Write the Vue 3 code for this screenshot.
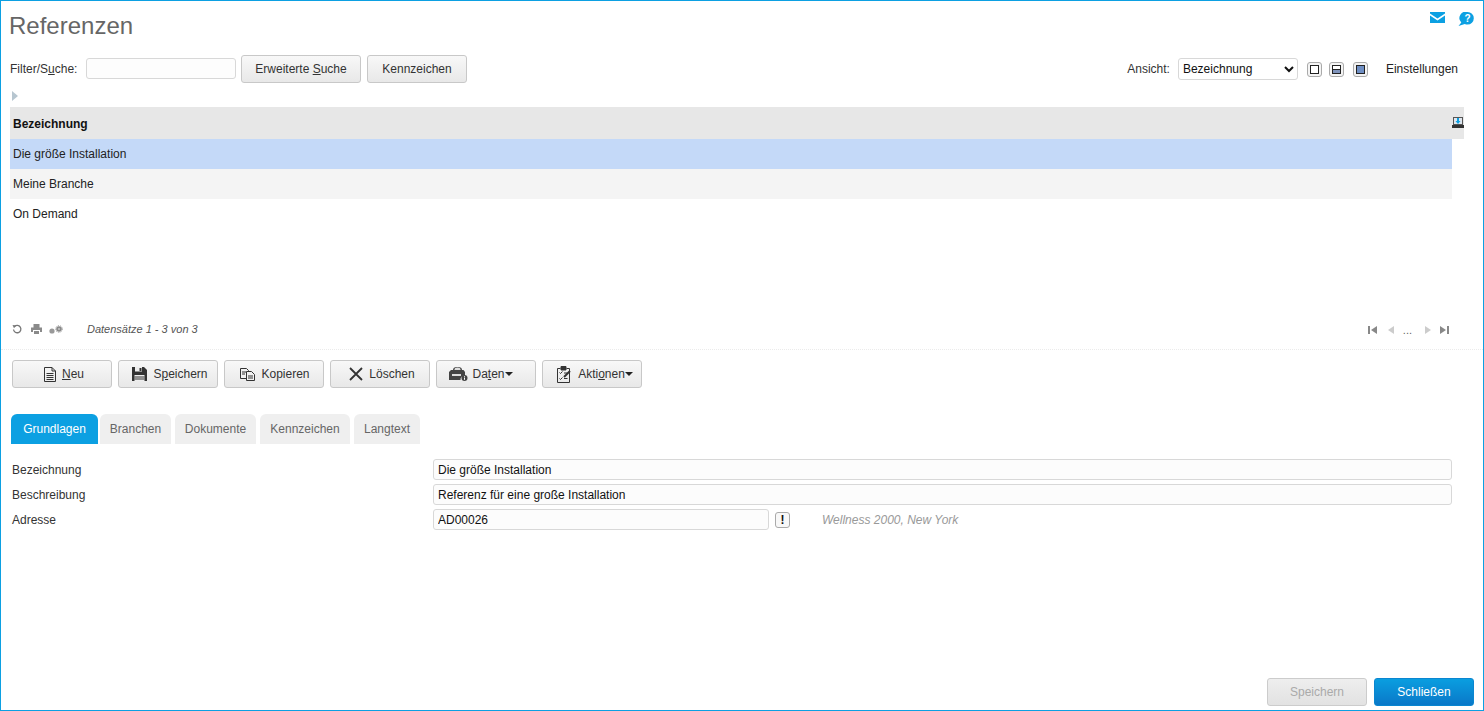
<script setup>
const tabs = ['Grundlagen', 'Branchen', 'Dokumente', 'Kennzeichen', 'Langtext']
const rows = ['Die größe Installation', 'Meine Branche', 'On Demand']
</script>

<template>
  <div class="frame">
    <header class="top">
      <h1>Referenzen</h1>
      <div class="top-icons">
        <svg width="15" height="11" viewBox="0 0 15 11"><path fill="#0ca0e2" d="M0 0h15v1.600L7.500 6.600 0 1.600zM0 3.400l7.500 5 7.500-5V11H0z"/></svg>
        <svg width="16" height="14" viewBox="0 0 16 14"><path fill="#0ca0e2" d="M9.500 0a6.300 6.300 0 0 1 0 12.600c-1 0-1.900-.2-2.700-.6L.5 14l2.800-3.500A6.300 6.300 0 0 1 9.500 0z"/><text x="9.500" y="10" text-anchor="middle" class="q">?</text></svg>
      </div>
    </header>

    <div class="filter">
      <label class="lbl flt">Filter/S<u>u</u>che:</label>
      <input class="search" type="text" />
      <button class="btn b120"><span>Erweiterte <u>S</u>uche</span></button>
      <button class="btn b100 ml6">Kennzeichen</button>
      <div class="view">
        <span class="lbl">Ansicht:</span>
        <select class="sel"><option>Bezeichnung</option></select>
        <span class="vb vb1"><i></i></span>
        <span class="vb vb2"><i></i></span>
        <span class="vb vb3"><i></i></span>
        <span class="settings">Einstellungen</span>
      </div>
    </div>

    <div class="arrow"></div>

    <div class="grid-head">
      <b>Bezeichnung</b>
      <svg class="export" width="12" height="11" viewBox="0 0 12 11"><path fill="#555" d="M1 0h10v8H1z"/><path fill="#dfe6ee" d="M2 1h8v6H2z"/><path fill="#0ca0e2" d="M5 1h2v3h1.500L6 7 3.500 4H5z"/><path fill="#333" d="M0 8h12v3H0z"/></svg>
    </div>
    <div class="grid-body">
      <div v-for="(r, i) in rows" :key="r" class="row" :class="{ sel1: i === 0, alt: i === 1 }">{{ r }}</div>
    </div>

    <div class="pager">
      <svg width="10" height="10" viewBox="0 0 10 10" fill="none" stroke="#777" stroke-width="1.300"><path d="M2.500 2.500A3.700 3.700 0 1 1 1.500 5.500"/><path fill="#777" stroke="none" d="M0.500 1l3.800.4L2 4.300z"/></svg>
      <svg class="ml9" width="11" height="10" viewBox="0 0 11 10"><path fill="#8a8a8a" d="M2.500 0h6v3.500H11V8H9V6H2v2H0V3.500h2.500z"/><path fill="#8a8a8a" d="M3 7h5v3H3z"/></svg>
      <svg class="ml7" width="14" height="9" viewBox="0 0 14 9"><circle cx="3" cy="6" r="2.600" fill="#999"/><circle cx="10" cy="4" r="2.800" fill="#8a8a8a"/><circle cx="10" cy="4" r="3.400" fill="none" stroke="#8a8a8a" stroke-width="0.800" stroke-dasharray="1.200 1.200"/><circle cx="10" cy="4" r="0.900" fill="#ccc"/></svg>
      <em class="records">Datensätze 1 - 3 von 3</em>
      <div class="nav">
        <svg width="9" height="8" viewBox="0 0 9 8"><path fill="#888" d="M0 0h2v8H0zM9 0v8L3 4z"/></svg>
        <svg class="gap-prev" width="6" height="8" viewBox="0 0 6 8"><path fill="#ccc" d="M6 0v8L0 4z"/></svg>
        <span class="dots">...</span>
        <svg width="6" height="8" viewBox="0 0 6 8"><path fill="#ccc" d="M0 0v8l6-4z"/></svg>
        <svg class="gap-last" width="9" height="8" viewBox="0 0 9 8"><path fill="#888" d="M7 0h2v8H7zM0 0v8l6-4z"/></svg>
      </div>
    </div>

    <div class="actions">
      <button class="btn b100">
        <svg width="12" height="15" viewBox="0 0 12 15" fill="none" stroke="#333"><path d="M.5.500h7.500l3.500 3.500v10.500H.5z"/><path d="M8 .5V4h3.500M2.500 6.500h7M2.500 8.500h7M2.500 10.500h7M2.500 12.500h7"/></svg>
        <span><u>N</u>eu</span>
      </button>
      <button class="btn b100">
        <svg width="15" height="14" viewBox="0 0 15 14"><path fill="#333" d="M0 0h12l3 3v11H0z"/><path fill="#eee" d="M3 0h7v4.500H3z"/><path fill="#333" d="M7.500 1h2v3h-2z"/><path fill="#eee" d="M2.500 8h10v6h-10z"/><path fill="#333" d="M2.500 9.500h10v1h-10zM2.500 11.500h10v1h-10z"/></svg>
        <span>S<u>p</u>eichern</span>
      </button>
      <button class="btn b100 kop">
        <svg width="15" height="13" viewBox="0 0 15 13" fill="#f2f2f2" stroke="#333"><path d="M.5.500h6l2 2v8h-8z"/><path d="M6.500 3.500h5l3 3v6h-8z"/><path d="M2 4h4M2 6h3M8 8h5M8 10h5" fill="none"/></svg>
        <span>Kopieren</span>
      </button>
      <button class="btn b100">
        <svg width="14" height="14" viewBox="0 0 14 14" fill="none" stroke="#333" stroke-width="1.800"><path d="M1 1l12 12M13 1L1 13"/></svg>
        <span>Löschen</span>
      </button>
      <button class="btn b100 tight">
        <svg width="19" height="14" viewBox="0 0 19 14"><path fill="#444" d="M4 3a4 3 0 0 1 4-3h1a4 3 0 0 1 4 3h1.500L16 5v3.500a4 4 0 0 0-4.500 4.500H0V5l2-2z"/><path fill="#ddd" d="M5.500 2.500a3 2 0 0 1 6 0v.5h-6zM3 7h9v2H3z"/><circle cx="15.500" cy="11" r="3" fill="#444"/><path fill="#fff" d="M15 9.200h1v.9h-1zM15 10.600h1v2.200h-1z"/></svg>
        <span>Da<u>t</u>en<i class="caret"></i></span>
      </button>
      <button class="btn b100 akt">
        <svg width="15" height="17" viewBox="0 0 15 17" fill="none" stroke="#333"><path d="M3.500 2.500H.5v14h12v-14h-3"/><path fill="#333" d="M4 .5h5v3.500H4z"/><path d="M2.500 6.500l1 1 2-2M2.500 12.500l1 1 2-2M7 7h3.500M7 12.500h3.500"/><path stroke-width="2" d="M7 11l6-6"/></svg>
        <span>Akti<u>o</u>nen<i class="caret"></i></span>
      </button>
    </div>

    <nav class="tabs">
      <span v-for="(t, i) in tabs" :key="t" class="tab" :class="'t' + i">{{ t }}</span>
    </nav>

    <form class="form" @submit.prevent>
      <label>Bezeichnung</label>
      <input class="field" value="Die größe Installation" />
      <label>Beschreibung</label>
      <input class="field" value="Referenz für eine große Installation" />
      <label>Adresse</label>
      <div class="addr">
        <input class="field short" value="AD00026" />
        <span class="bang">!</span>
        <em class="hint">Wellness 2000, New York</em>
      </div>
    </form>

    <footer class="foot">
      <button class="btn b100 disabled">Speichern</button>
      <button class="btn b100 primary">Schließen</button>
    </footer>
  </div>
</template>

<style>
html, body { margin: 0; padding: 0; background: #fff; }
</style>

<style scoped>
.frame {
  box-sizing: border-box;
  width: 1484px;
  height: 711px;
  border: 1px solid #0ca0e2;
  background: #fff;
  display: flex;
  flex-direction: column;
  font: 12px/14px "Liberation Sans", Arial, sans-serif;
  color: #222;
  overflow: hidden;
}
.top { height: 54px; display: flex; justify-content: space-between; flex: none; }
h1 { margin: 11px 0 0 8px; font-size: 24px; line-height: 28px; font-weight: 400; color: #666; }
.top-icons { display: flex; align-items: flex-start; gap: 13px; margin: 11px 9px 0 0; }
.q { font: bold 10px "Liberation Sans", sans-serif; fill: #fff; }

.filter { height: 28px; display: flex; align-items: center; padding: 0 25px 0 9px; flex: none; }
.lbl { color: #333; }
.flt { width: 76px; }
.search {
  box-sizing: border-box; width: 150px; height: 21px; margin: -1px 5px 0 0;
  border: 1px solid #d8d8d8; border-radius: 3px; background: #fdfdfd; padding: 0 4px;
}
.btn {
  box-sizing: border-box; height: 28px; padding: 0; flex: none;
  border: 1px solid #c8c8c8; border-radius: 3px;
  background: linear-gradient(#f8f8f8, #e8e8e8);
  font: inherit; color: #333;
  display: inline-flex; align-items: center; justify-content: center; gap: 6px;
}
.b120 { width: 120px; }
.b100 { width: 100px; }
.ml6 { margin-left: 6px; }
.view { margin-left: auto; display: flex; align-items: center; }
.view .lbl { margin-right: 8px; }
.sel {
  box-sizing: border-box; width: 120px; height: 22px; margin-right: 9px;
  border: 1px solid #d8d8d8; border-radius: 3px; background: #fff;
  font: inherit; color: #111; padding: 0;
}
.vb {
  box-sizing: border-box; width: 15px; height: 15px; margin-right: 7px;
  border: 1px solid #aaa; border-radius: 3px; display: flex; align-items: center; justify-content: center;
  background: #f4f4f4;
}
.vb i { box-sizing: border-box; display: block; width: 9px; height: 9px; border: 1px solid #222; background: #fff; }
.vb2 { margin-right: 9px; }
.vb2 i { background: linear-gradient(#fff 50%, #222 50%, #222 62%, #7f93bb 62%); }
.vb3 i { background: #6f8fc4; }
.vb3 { margin-right: 0; }
.settings { margin-left: 18px; color: #222; }

.arrow {
  width: 0; height: 0; margin: 8px 0 6px 11px; flex: none;
  border-left: 6px solid #b7c6d0; border-top: 5px solid transparent; border-bottom: 5px solid transparent;
}
.grid-head {
  height: 32px; margin: 0 19px 0 9px; padding: 1px 0 0 3px; box-sizing: border-box; background: #e7e7e7; flex: none;
  display: flex; align-items: center; justify-content: space-between; color: #111;
}
.export { margin-top: -2px; }
.grid-body { height: 181px; margin: 0 31px 0 9px; flex: none; }
.row { height: 30px; line-height: 30px; padding-left: 3px; color: #222; }
.sel1 { background: #c4d9f8; }
.alt { background: #f4f4f4; }

.pager {
  height: 30px; padding: 0 34px 11px 11px; box-sizing: border-box; flex: none;
  display: flex; align-items: center; border-bottom: 1px dotted #ebebeb;
}
.ml9 { margin-left: 9px; }
.ml7 { margin-left: 7px; }
.records { margin-left: 24px; font-size: 11px; color: #555; }
.nav { margin-left: auto; margin-top: 2px; display: flex; align-items: center; }
.gap-prev { margin-left: 11px; }
.gap-last { margin-left: 9px; }
.dots { margin: 0 13px 0 9px; color: #666; font-size: 11px; }

.actions { display: flex; gap: 6px; margin: 10px 0 0 11px; flex: none; }
.actions .btn { padding-left: 4px; }
.actions .kop { padding-left: 2px; }
.actions .akt { padding-left: 6px; }
.actions .tight { padding: 0 10px 0 0; gap: 4px; }
.caret {
  display: inline-block; vertical-align: 2px;
  border-top: 4px solid #222; border-left: 4px solid transparent; border-right: 4px solid transparent;
}
.tabs { display: flex; margin: 26px 0 0 10px; height: 30px; flex: none; }
.tab {
  box-sizing: border-box; height: 30px; line-height: 30px; text-align: center;
  background: #efefef; color: #666; border-radius: 6px 6px 0 0; margin-right: 4px;
}
.t0 { width: 87px; background: #0ca0e2; color: #fff; margin-right: 2px; }
.t1 { width: 71px; }
.t2 { width: 81px; }
.t3 { width: 90px; }
.t4 { width: 66px; }

.form {
  display: grid; grid-template-columns: 421px 1019px; grid-auto-rows: 21px; row-gap: 4px;
  margin: 15px 0 0 11px; align-items: center; flex: none;
}
.form label { color: #333; }
.field {
  box-sizing: border-box; width: 100%; height: 21px; padding: 0 4px;
  border: 1px solid #d8d8d8; border-radius: 3px; background: #fcfcfc;
  font: inherit; color: #111;
}
.addr { display: flex; align-items: center; }
.short { width: 336px; }
.bang {
  box-sizing: border-box; width: 15px; height: 16px; margin-left: 6px; text-align: center;
  border: 1px solid #aaa; border-radius: 3px; font-weight: 700; line-height: 14px; color: #111; background: #f8f8f8;
}
.hint { margin-left: 32px; color: #999; }

.foot { margin-top: auto; padding: 0 9px 4px 0; display: flex; justify-content: flex-end; gap: 7px; flex: none; }
.disabled { color: #aaa; background: linear-gradient(#eee, #e2e2e2); border-color: #ccc; }
.primary { color: #fff; background: linear-gradient(#0a9ee0, #0a78c8); border-color: #0a86d0; }
</style>
